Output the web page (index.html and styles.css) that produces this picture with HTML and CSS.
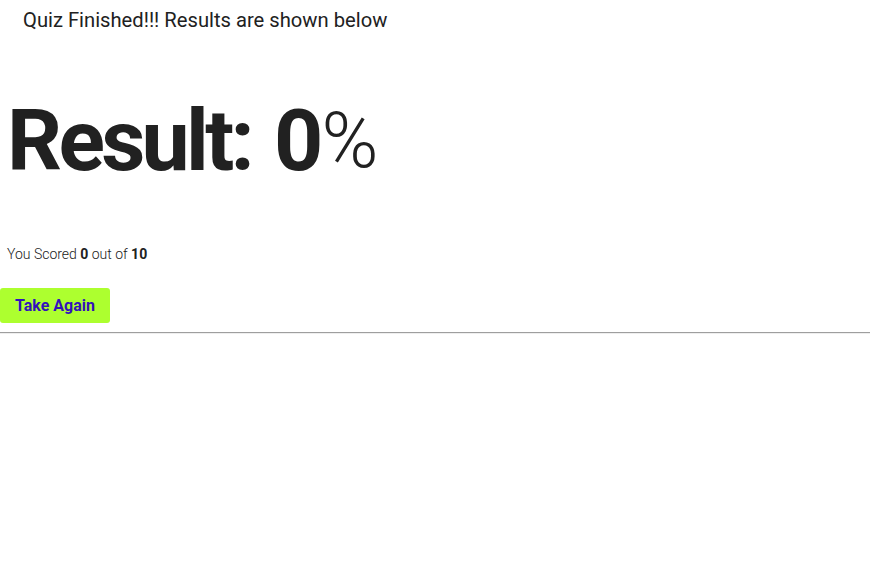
FILE: index.html
```html
<!DOCTYPE html>
<html>
<head>
<meta charset="utf-8">
<link rel="stylesheet" href="styles.css">
</head>
<body>
<div class="quiz">
  <div class="title">Quiz Finished!!! Results are shown below</div>
  <div class="result">
    <h1 class="score"><span class="label">Result:</span><span class="num">0</span><span class="pct">%</span></h1>
    <p class="summary">You Scored <b>0</b> out of <b>10</b></p>
    <button class="again">Take Again</button>
  </div>
  <hr class="rule">
</div>
</body>
</html>
```
FILE: styles.css
```css
html, body {
  margin: 0;
  padding: 0;
  background: #ffffff;
}
body {
  font-family: Roboto, "Liberation Sans", sans-serif;
  color: #212121;
}
.title {
  padding: 8px 0 0 23px;
  font-size: 20.2px;
  line-height: 24px;
  color: #212121;
}
.result {
  display: flex;
  flex-direction: column;
  align-items: flex-start;
}
.score {
  display: flex;
  align-items: center;
  margin: 59px 0 0 7px;
  height: 100px;
  font-size: 86px;
  line-height: 100px;
  font-weight: 700;
  color: #212121;
}
.label {
  letter-spacing: -3.7px;
}
.num {
  margin-left: 23px;
}
.pct {
  margin-left: -2px;
  font-size: 77px;
  line-height: 90px;
  font-weight: 300;
}
.summary {
  margin: 53px 0 0 7px;
  font-size: 14px;
  font-weight: 300;
  line-height: 20px;
  color: #212121;
}
.summary b {
  font-weight: 700;
}
.again {
  margin-top: 24px;
  width: 110px;
  height: 35px;
  border: none;
  border-radius: 3px;
  background: #adff2f;
  color: #3311bb;
  font-family: Roboto, "Liberation Sans", sans-serif;
  font-size: 16px;
  font-weight: 700;
  padding: 0;
}
.rule {
  margin: 9px 0 0 0;
  border: none;
  border-top: 1px solid #9e9e9e;
  border-bottom: 1px solid #eeeeee;
  height: 0;
}
```
